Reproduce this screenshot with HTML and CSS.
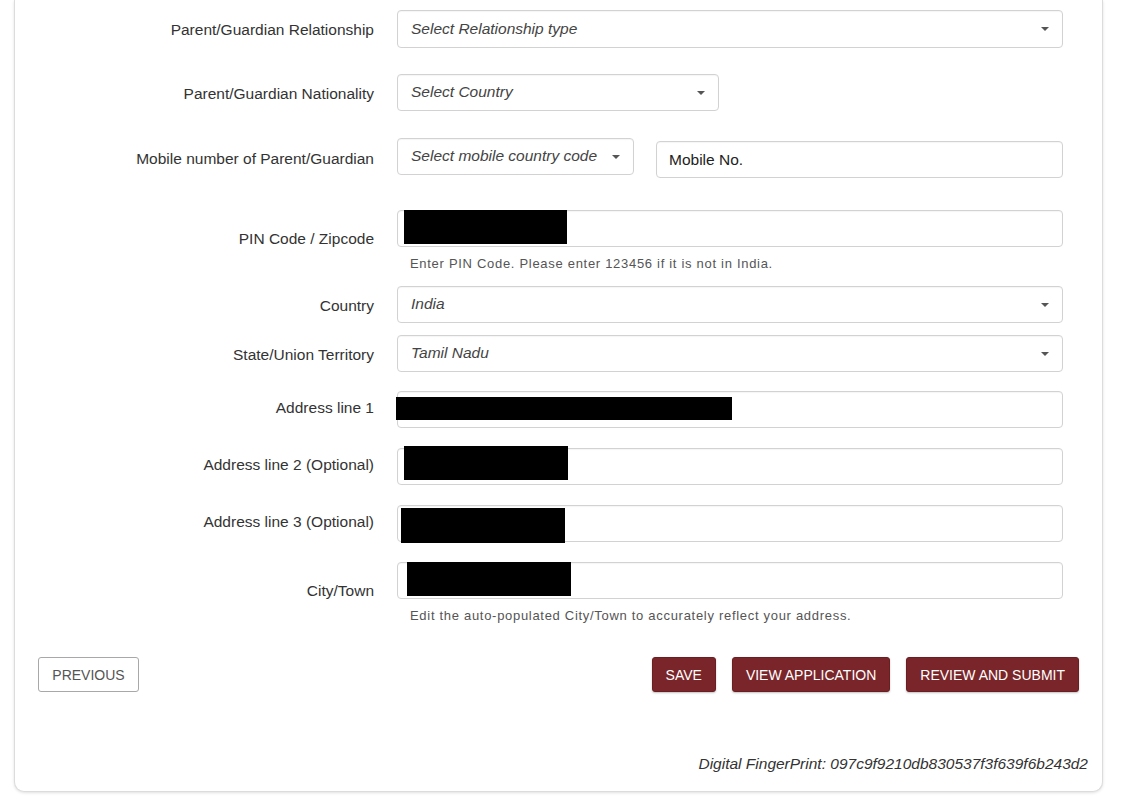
FILE: index.html
```html
<!DOCTYPE html>
<html lang="en">
<head>
<meta charset="utf-8">
<title>Parent/Guardian Details</title>
<link rel="stylesheet" href="styles.css">
</head>
<body>
<div class="card">
  <form class="form">
    <div class="row gap-27">
      <label class="label">Parent/Guardian Relationship</label>
      <div class="select first"><span class="ph">Select Relationship type</span><span class="caret"></span></div>
    </div>
    <div class="row gap-27">
      <label class="label">Parent/Guardian Nationality</label>
      <div class="select w-country"><span class="ph">Select Country</span><span class="caret"></span></div>
    </div>
    <div class="row gap-32">
      <label class="label">Mobile number of Parent/Guardian</label>
      <div class="pair">
        <div class="select w-code"><span class="ph">Select mobile country code</span><span class="caret"></span></div>
        <div class="input mobile"><span class="val">Mobile No.</span></div>
      </div>
    </div>
    <div class="row gap-14">
      <label class="label up">PIN Code / Zipcode</label>
      <div class="stack">
        <div class="input"><span class="redact r-pin"></span></div>
        <p class="help">Enter PIN Code. Please enter 123456 if it is not in India.</p>
      </div>
    </div>
    <div class="row gap-12">
      <label class="label">Country</label>
      <div class="select"><span class="ph">India</span><span class="caret"></span></div>
    </div>
    <div class="row gap-19">
      <label class="label">State/Union Territory</label>
      <div class="select"><span class="ph">Tamil Nadu</span><span class="caret"></span></div>
    </div>
    <div class="row gap-20">
      <label class="label lower">Address line 1</label>
      <div class="input"><span class="redact r-a1"></span></div>
    </div>
    <div class="row gap-20">
      <label class="label lower">Address line 2 (Optional)</label>
      <div class="input"><span class="redact r-a2"></span></div>
    </div>
    <div class="row gap-20">
      <label class="label lower">Address line 3 (Optional)</label>
      <div class="input"><span class="redact r-a3"></span></div>
    </div>
    <div class="row gap-33">
      <label class="label up">City/Town</label>
      <div class="stack">
        <div class="input"><span class="redact r-city"></span></div>
        <p class="help">Edit the auto-populated City/Town to accurately reflect your address.</p>
      </div>
    </div>
  </form>
  <div class="actions">
    <button type="button" class="btn btn-outline">PREVIOUS</button>
    <div class="actions-right">
      <button type="button" class="btn btn-primary">SAVE</button>
      <button type="button" class="btn btn-primary">VIEW APPLICATION</button>
      <button type="button" class="btn btn-primary">REVIEW AND SUBMIT</button>
    </div>
  </div>
  <p class="fingerprint">Digital FingerPrint: 097c9f9210db830537f3f639f6b243d2</p>
</div>
</body>
</html>
```
FILE: styles.css
```css
* { box-sizing: border-box; }
html, body { margin: 0; padding: 0; }
body {
  background: #ffffff;
  font-family: "Liberation Sans", Arial, sans-serif;
  color: #333;
  width: 1130px;
  height: 808px;
  overflow: hidden;
}
.card {
  margin-left: 14px;
  width: 1089px;
  background: #fff;
  border: 1px solid #dcdcdc;
  border-top: none;
  border-radius: 0 0 10px 10px;
  box-shadow: 0 1px 3px rgba(0,0,0,0.12);
  padding: 10px 0 19px 0;
}
.form { display: flex; flex-direction: column; }
.row {
  display: grid;
  grid-template-columns: 359px 666px;
  column-gap: 23px;
  align-items: center;
}
.gap-27 { margin-bottom: 27px; }
.gap-32 { margin-bottom: 32px; }
.gap-14 { margin-bottom: 14px; }
.gap-12 { margin-bottom: 12px; }
.gap-19 { margin-bottom: 19px; }
.gap-20 { margin-bottom: 20px; }
.gap-33 { margin-bottom: 33px; }
.label {
  text-align: right;
  font-size: 15.5px;
  color: #333;
  line-height: 18px;
  padding-top: 2px;
}
.label.lower { padding-top: 0; position: relative; top: -2px; }
.label.up { padding-top: 0; position: relative; top: -2px; }
.select, .input {
  height: 37px;
  border: 1px solid #d2d2d2;
  border-radius: 4px;
  background: #fff;
  display: flex;
  align-items: center;
  box-shadow: inset 0 1px 1px rgba(0,0,0,0.04);
}
.select.first { height: 38px; margin-bottom: -1px; }
.select { padding: 0 13px 0 13px; justify-content: space-between; }
.ph {
  font-style: italic;
  font-size: 15.5px;
  color: #444;
  margin-top: -1px;
}
.caret {
  width: 0; height: 0;
  border-left: 4px solid transparent;
  border-right: 4px solid transparent;
  border-top: 4px solid #555;
}
.w-country { width: 322px; }
.w-code { width: 237px; }
.pair { display: flex; align-items: flex-start; gap: 22px; }
.input.mobile { flex: 1; margin-top: 3px; padding-left: 12px; align-items: center; }
.val { font-size: 15.5px; color: #222; }
.stack { display: flex; flex-direction: column; }
.help {
  margin: 9px 0 0 13px;
  font-size: 13px;
  letter-spacing: 0.7px;
  color: #555;
  line-height: 16px;
}
.input { align-items: flex-start; }
.redact { display: block; background: #000; }
.r-pin { width: 163px; height: 34px; margin-left: 6px; margin-top: -1px; }
.r-a1 { width: 336px; height: 23px; margin-left: -2px; margin-top: 5px; }
.r-a2 { width: 164px; height: 34px; margin-left: 6px; margin-top: -3px; }
.r-a3 { width: 164px; height: 35px; margin-left: 3px; margin-top: 2px; }
.r-city { width: 164px; height: 34px; margin-left: 9px; margin-top: -1px; }
.actions {
  display: flex;
  justify-content: space-between;
  align-items: center;
  padding: 0 23px;
}
.actions-right { display: flex; gap: 16px; }
.btn {
  height: 35px;
  font-family: "Liberation Sans", Arial, sans-serif;
  font-size: 14px;
  padding: 0 13px;
  border-radius: 3px;
  cursor: pointer;
}
.btn-outline {
  background: #fff;
  color: #555;
  border: 1px solid #a8a8a8;
  width: 101px;
  padding: 0;
}
.btn-primary {
  background: #7a2529;
  color: #fff;
  border: 1px solid #6a1e22;
  box-shadow: 0 1px 2px rgba(0,0,0,0.25);
}
.fingerprint {
  margin: 64px 14px 0 0;
  text-align: right;
  font-style: italic;
  font-size: 15.5px;
  color: #333;
  line-height: 16px;
}
```
